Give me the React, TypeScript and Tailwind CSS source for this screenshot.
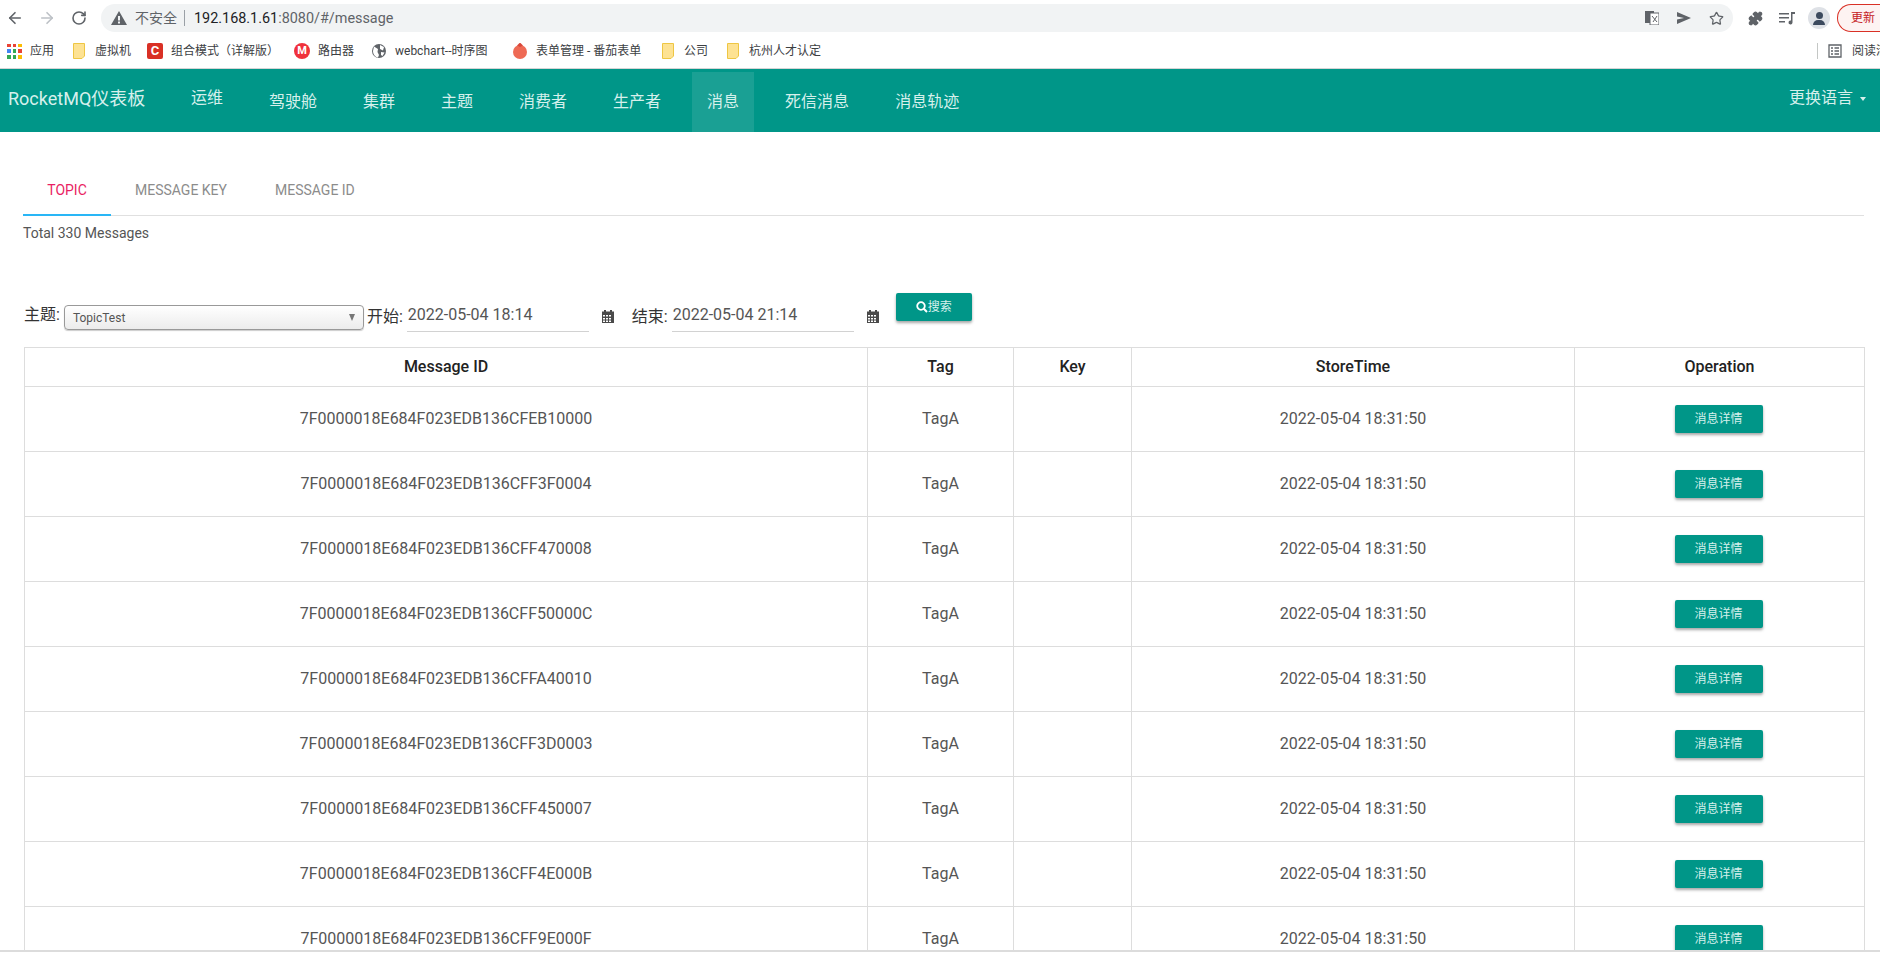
import { ArrowLeft, ArrowRight, RotateCw, Star, Puzzle } from "lucide-react";

const font = "font-['Roboto','Noto_Sans_CJK_SC',sans-serif]";

const bookmarks = [
  { label: "虚拟机", icon: "folder", gap: "w-[76px]" },
  { label: "组合模式（详解版）", icon: "c", gap: "w-[147px]" },
  { label: "路由器", icon: "m", gap: "w-[77px]" },
  { label: "webchart--时序图", icon: "globe", gap: "w-[141px]" },
  { label: "表单管理 - 番茄表单", icon: "tomato", gap: "w-[148px]" },
  { label: "公司", icon: "folder", gap: "w-[65px]" },
  { label: "杭州人才认定", icon: "folder", gap: "w-[100px]" },
];

const navItems = ["驾驶舱", "集群", "主题", "消费者", "生产者", "消息", "死信消息", "消息轨迹"];

const rows = [
  "7F0000018E684F023EDB136CFEB10000",
  "7F0000018E684F023EDB136CFF3F0004",
  "7F0000018E684F023EDB136CFF470008",
  "7F0000018E684F023EDB136CFF50000C",
  "7F0000018E684F023EDB136CFFA40010",
  "7F0000018E684F023EDB136CFF3D0003",
  "7F0000018E684F023EDB136CFF450007",
  "7F0000018E684F023EDB136CFF4E000B",
  "7F0000018E684F023EDB136CFF9E000F",
];

const BookmarkIcon = ({ type }: { type: string }) => {
  if (type === "folder") {
    return (
      <svg width="12" height="16" viewBox="0 0 12 16">
        <path d="M.5.5h11v12.500l-2.500 2.500H.5z" fill="#fde293" stroke="#eec643" />
      </svg>
    );
  }
  if (type === "c") {
    return (
      <div className="w-4 h-4 rounded-[2px] bg-[#d93025] text-white text-[13px] leading-4 font-bold text-center">C</div>
    );
  }
  if (type === "m") {
    return (
      <div className="w-4 h-4 rounded-full bg-[#f0323c] text-white text-[11px] leading-4 font-bold text-center">M</div>
    );
  }
  if (type === "globe") {
    return (
      <svg width="16" height="16" viewBox="0 0 16 16">
        <circle cx="8" cy="8" r="7" fill="#5f6368" />
        <path d="M3 3.500 7 6l-.500 3L8 12l-1 2.500C4 14 2 11 2 8zM9 2l4 2-1 3.500-3-1.500zM10 9l3.500.500-2 3.500-1.500-1z" fill="#fff" />
      </svg>
    );
  }
  return (
    <svg width="16" height="18" viewBox="0 0 16 18">
      <circle cx="8" cy="10" r="7" fill="#ee6a55" />
      <path d="M5 3.500 8 5l3-1.500L8.500 1h-1z" fill="#d9483a" />
    </svg>
  );
};

const CalendarIcon = () => (
  <svg width="12" height="14" viewBox="0 0 12 14" className="shrink-0">
    <path d="M0 2.500h2V1h2v1.500h4V1h2v1.500h2V14H0zM1 6v1.500h2V6zm3 0v1.500h2V6zm3 0v1.500h2V6zM1 9v1.500h2V9zm3 0v1.500h2V9zm3 0v1.500h2V9zm-6 2.500V13h2v-1.500zm3 0V13h2v-1.500zm3 0V13h2v-1.500z" fill="#4a4a4a" />
  </svg>
);

const BrowserChrome = () => (
  <div className={`bg-white h-[69px] border-b border-[#d5d5d5] overflow-hidden shrink-0 ${font}`}>
    <div className="h-[34px] flex items-center pt-[2px]">
      <ArrowLeft size={18} strokeWidth={2.2} className="text-[#5f6368] ml-[6px] shrink-0" />
      <ArrowRight size={18} strokeWidth={2.2} className="text-[#bdc1c6] ml-[14px] shrink-0" />
      <RotateCw size={16} strokeWidth={2.4} className="text-[#5f6368] ml-[15px] shrink-0" />
      <div className="ml-[14px] w-[1632px] h-7 rounded-full bg-[#f1f3f4] flex items-center pl-[10px] shrink-0">
        <svg width="16" height="14" viewBox="0 0 16 14" className="shrink-0">
          <path d="M8 0l8 14H0zM7 5v4.500h2V5zm0 5.500v2h2v-2z" fill="#5f6368" fillRule="evenodd" />
        </svg>
        <span className="ml-[8px] text-sm text-[#5f6368]">不安全</span>
        <span className="ml-[7px] h-4 w-px bg-[#9aa0a6]" />
        <span className="ml-[9px] mt-[1px] text-[14.4px] text-[#202124]">192.168.1.61<span className="text-[#5f6368]">:8080/#/message</span></span>
        <div className="ml-auto flex items-center pr-[9px]">
          <svg width="14" height="14" viewBox="0 0 14 14" className="mr-[18px]">
            <rect x="0" y="0" width="9" height="12" fill="#5f6368" />
            <rect x="5" y="2" width="9" height="12" fill="#fff" stroke="#5f6368" />
            <path d="M7 5l5 6M12 5l-4 6" stroke="#5f6368" />
          </svg>
          <svg width="14" height="12" viewBox="0 0 14 12" className="mr-[18px]">
            <path d="M0 0l14 6-14 6V7.500L7 6 0 4.500z" fill="#5f6368" />
          </svg>
          <Star size={15} strokeWidth={2} className="text-[#5f6368]" />
        </div>
      </div>
      <Puzzle size={15} strokeWidth={2} className="ml-[15px] text-[#5f6368] fill-[#5f6368] shrink-0" />
      <svg width="16" height="14" viewBox="0 0 16 14" className="ml-[16px] shrink-0">
        <path d="M0 2h10v1.500H0zM0 6h10v1.500H0zM0 10h6v1.500H0zM12 1h4v2h-2.500v8.500a2 2 0 1 1-1.500-2z" fill="#5f6368" />
      </svg>
      <div className="ml-[13px] w-[22px] h-[22px] rounded-full bg-[#dee1e6] flex flex-col items-center justify-center shrink-0">
        <div className="w-[7px] h-[7px] rounded-full bg-[#3c4a5e]" />
        <div className="w-3 h-[5px] mt-[1px] rounded-t-full bg-[#3c4a5e]" />
      </div>
      <div className="ml-[7px] h-7 pl-[13px] w-[60px] shrink-0 rounded-l-full border border-r-0 border-[#d93025] bg-[#fdf3f2] text-xs leading-[26px] text-[#c5221f] whitespace-nowrap">更新</div>
    </div>
    <div className="h-[34px] flex items-center pl-[7px] text-xs text-[#3c4043] whitespace-nowrap">
      <div className="w-[64px] flex items-center shrink-0">
        <div className="w-[15px] h-[15px] grid grid-cols-3 gap-[2px]">
          <i className="bg-[#ea4335]" /><i className="bg-[#ea4335]" /><i className="bg-[#fbbc04]" />
          <i className="bg-[#4285f4]" /><i className="bg-[#34a853]" /><i className="bg-[#ea4335]" />
          <i className="bg-[#34a853]" /><i className="bg-[#34a853]" /><i className="bg-[#fbbc04]" />
        </div>
        <span className="ml-[8px]">应用</span>
      </div>
      {bookmarks.map((b) => (
        <div key={b.label} className={`flex items-center shrink-0 ${b.gap}`}>
          <div className="w-4 flex justify-center"><BookmarkIcon type={b.icon} /></div>
          <span className="ml-[8px]">{b.label}</span>
        </div>
      ))}
      <div className="ml-auto flex items-center w-[63px] shrink-0 overflow-hidden">
        <span className="h-4 w-px bg-[#c4c7c5] mr-[10px] shrink-0" />
        <svg width="14" height="14" viewBox="0 0 14 14" className="shrink-0">
          <path d="M1 1h12v12H1zM3 4h2M6.500 4H11M3 7h2M6.500 7H11M3 10h2M6.500 10H11" fill="none" stroke="#5f6368" strokeWidth="1.300" />
        </svg>
        <span className="ml-[10px]">阅读清单</span>
      </div>
    </div>
  </div>
);

const NavBar = () => (
  <div className={`h-[63px] bg-[#009688] text-[#d6f0ec] flex shrink-0 text-base ${font}`}>
    <div className="pl-2 w-[168px] pt-[17px] text-lg leading-[26px] whitespace-nowrap">RocketMQ仪表板</div>
    <div className="mx-2 px-[15px] pt-[17px] leading-6">运维</div>
    {navItems.map((item) => (
      <div
        key={item}
        className={`mt-[3px] mx-2 px-[15px] pt-[18px] leading-6 ${item === "消息" ? "bg-[rgba(255,255,255,0.1)]" : ""}`}
      >
        {item}
      </div>
    ))}
    <div className="ml-auto pt-[17px] pr-[14px] flex leading-6 whitespace-nowrap">
      更换语言
      <span className="ml-[7px] mt-[11px] w-0 h-0 border-x-[3.500px] border-x-transparent border-t-4 border-t-[#d6f0ec]" />
    </div>
  </div>
);

const Tabs = () => (
  <div className="mt-9 ml-[23px] mr-[16px] h-[48px] border-b border-[#e0e0e0] flex text-sm leading-[44px]">
    <div className="w-[88px] h-[48px] text-center text-[#e91e63] border-b-2 border-[#29b6f6]">TOPIC</div>
    <div className="px-6 text-[#8c8c8c]">MESSAGE KEY</div>
    <div className="px-6 text-[#8c8c8c]">MESSAGE ID</div>
  </div>
);

const DateField = ({ label, value, className }: { label: string; value: string; className?: string }) => (
  <>
    <span className={`text-base text-[#333] leading-6 pt-[6px] ${className ?? ""}`}>{label}:</span>
    <div className="ml-[4px] h-[33px] w-[182px] pl-[1px] pt-[4px] border-b border-[#d2d2d2] text-base leading-6 text-[#555]">{value}</div>
    <div className="ml-[13px] w-[15px] pt-[10px]"><CalendarIcon /></div>
  </>
);

const Filters = () => (
  <div className="mt-[54px] ml-[24px] h-[50px] flex items-start">
    <div className="pt-[7px] flex items-start">
      <span className="text-base text-[#333] leading-6 mt-[-1px]">主题:</span>
      <div className="ml-[4px] mt-[1px] w-[300px] h-[25px] rounded-[4px] border border-[#999] bg-gradient-to-b from-white to-[#ececec] flex items-center pl-[8px] pr-[8px] text-xs text-[#555] shadow-[0_1px_1px_rgba(0,0,0,0.2)]">
        TopicTest
        <span className="ml-auto w-0 h-0 border-x-[3.500px] border-x-transparent border-t-[7px] border-t-[#777]" />
      </div>
    </div>
    <div className="ml-[3px] pt-[2px] flex items-start">
      <DateField label="开始" value="2022-05-04 18:14" />
      <DateField label="结束" value="2022-05-04 21:14" className="ml-[15px]" />
    </div>
    <button className="ml-[14px] mt-[-4px] w-[76px] h-[28px] rounded-[2px] bg-[#009688] text-[#d6f0ec] text-xs flex items-center justify-center shadow-[0_2px_3px_rgba(0,0,0,0.35)]">
      <svg width="12" height="12" viewBox="0 0 12 12">
        <circle cx="5" cy="5" r="3.800" fill="none" stroke="#fff" strokeWidth="1.800" />
        <path d="M7.800 7.800 11 11" stroke="#fff" strokeWidth="2" />
      </svg>
      搜索
    </button>
  </div>
);

const MessageTable = () => (
  <table className="ml-[24px] w-[1840px] table-fixed border-collapse text-base text-[#555]">
    <colgroup>
      <col className="w-[843px]" />
      <col className="w-[146px]" />
      <col className="w-[118px]" />
      <col className="w-[443px]" />
      <col className="w-[290px]" />
    </colgroup>
    <thead>
      <tr className="h-[39px]">
        {["Message ID", "Tag", "Key", "StoreTime", "Operation"].map((h) => (
          <th key={h} className="border border-[#ddd] font-medium text-base text-[#222] text-center">{h}</th>
        ))}
      </tr>
    </thead>
    <tbody>
      {rows.map((id) => (
        <tr key={id} className="h-[65px]">
          <td className="border border-[#ddd] text-center">{id}</td>
          <td className="border border-[#ddd] text-center">TagA</td>
          <td className="border border-[#ddd]" />
          <td className="border border-[#ddd] text-center">2022-05-04 18:31:50</td>
          <td className="border border-[#ddd] text-center">
            <button className="w-[88px] mr-[2px] h-[28px] rounded-[2px] bg-[#009688] text-[#d6f0ec] text-xs align-middle shadow-[0_2px_3px_rgba(0,0,0,0.35)]">消息详情</button>
          </td>
        </tr>
      ))}
    </tbody>
  </table>
);

export default function App() {
  return (
    <div className={`h-screen flex flex-col overflow-hidden bg-white ${font}`}>
      <BrowserChrome />
      <NavBar />
      <div className="flex-1 min-h-0 overflow-hidden">
        <Tabs />
        <div className="ml-[23px] mt-[7px] text-sm leading-5 text-[#555]">Total 330 Messages</div>
        <Filters />
        <MessageTable />
      </div>
      <div className="h-2 border-t-2 border-[#dcdcdc] bg-white shrink-0" />
    </div>
  );
}
